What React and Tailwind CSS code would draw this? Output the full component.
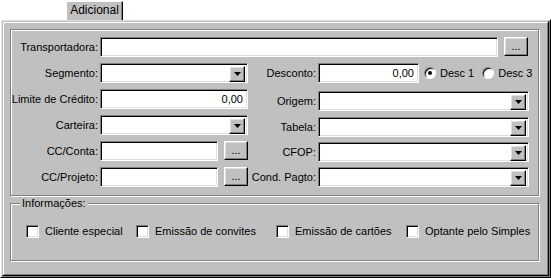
const sunken =
  "border border-t-[#808080] border-l-[#808080] border-b-white border-r-white shadow-[inset_1px_1px_0_#000,inset_-1px_-1px_0_#dfdfdf] bg-white";
const raised =
  "border border-t-white border-l-white border-r-black border-b-black shadow-[inset_-1px_-1px_0_#808080,inset_1px_1px_0_#dfdfdf] bg-[#c0c0c0]";

function Label({ width, children }) {
  return (
    <div className={`${width} shrink-0 pr-[2px] text-right leading-[20px]`}>{children}</div>
  );
}

function Edit({ width, value }) {
  return (
    <div className={`${sunken} ${width} h-[20px] shrink-0 px-[4px] text-right leading-[18px]`}>
      {value}
    </div>
  );
}

function Combo({ width }) {
  return (
    <div className={`${sunken} ${width} h-[20px] shrink-0 flex justify-end p-[2px]`}>
      <div className={`${raised} w-[16px] h-[16px] flex items-center justify-center`}>
        <svg width="7" height="4" viewBox="0 0 7 4">
          <path d="M0 0h7L3.5 4z" fill="#000" />
        </svg>
      </div>
    </div>
  );
}

function DotsButton() {
  return (
    <div className={`${raised} w-[24px] h-[19px] shrink-0 flex items-end justify-center pb-[3px] leading-none`}>
      ...
    </div>
  );
}

function Radio({ checked, label }) {
  return (
    <div className="flex items-center gap-[4px]">
      <div className="w-[12px] h-[12px] rounded-full border border-t-[#808080] border-l-[#808080] border-b-white border-r-white bg-white flex items-center justify-center shadow-[inset_1px_1px_0_#000]">
        {checked && <div className="w-[4px] h-[4px] rounded-full bg-black" />}
      </div>
      <span>{label}</span>
    </div>
  );
}

function Check({ label, width }) {
  return (
    <div className={`${width} flex items-center gap-[6px]`}>
      <div className={`${sunken} w-[13px] h-[13px] shrink-0`} />
      <span>{label}</span>
    </div>
  );
}

function Etched({ className, children }) {
  return (
    <div
      className={`${className} border border-[#808080] shadow-[1px_1px_0_#fff,inset_1px_1px_0_#fff]`}
    >
      {children}
    </div>
  );
}

export default function App() {
  return (
    <div
      className="w-[551px] h-[278px] bg-white text-[11px] text-black overflow-hidden"
      style={{ fontFamily: '"Liberation Sans", Arial, sans-serif' }}
    >
      <div className="h-[19px] flex items-end">
        <div className="ml-[66px] w-[57px] h-[19px] bg-[#c0c0c0] border-l border-t border-white border-r border-r-black shadow-[inset_-1px_0_0_#808080] text-center leading-[17px] relative top-[1px] z-10 text-[12px]">
          Adicional
        </div>
      </div>
      <div className="h-[259px] bg-[#c0c0c0] border-t border-l border-white border-r border-b border-r-black border-b-black">
        <div className="h-full border border-t-[#dfdfdf] border-l-[#dfdfdf] border-r-[#808080] border-b-[#808080]">
          <div className="h-full border border-t-[#c0c0c0] border-l-[#c0c0c0] border-r-black border-b-black">
            <div className="h-full border border-t-white border-l-white border-r-[#808080] border-b-[#808080] pl-[6px] pt-[6px]">
              <Etched className="w-[529px] h-[167px] pt-[7px]">
                <div className="flex flex-col gap-[6px]">
                  <div className="flex">
                    <Label width="w-[89px]">Transportadora:</Label>
                    <Edit width="w-[398px]" />
                    <div className="ml-[6px]">
                      <DotsButton />
                    </div>
                  </div>
                  <div className="flex">
                    <div className="w-[307px] shrink-0 flex flex-col gap-[6px]">
                      <div className="flex">
                        <Label width="w-[89px]">Segmento:</Label>
                        <Combo width="w-[148px]" />
                      </div>
                      <div className="flex">
                        <Label width="w-[89px]">Limite de Crédito:</Label>
                        <Edit width="w-[148px]" value="0,00" />
                      </div>
                      <div className="flex">
                        <Label width="w-[89px]">Carteira:</Label>
                        <Combo width="w-[148px]" />
                      </div>
                      <div className="flex">
                        <Label width="w-[89px]">CC/Conta:</Label>
                        <Edit width="w-[118px]" />
                        <div className="ml-[6px]">
                          <DotsButton />
                        </div>
                      </div>
                      <div className="flex">
                        <Label width="w-[89px]">CC/Projeto:</Label>
                        <Edit width="w-[118px]" />
                        <div className="ml-[6px]">
                          <DotsButton />
                        </div>
                      </div>
                    </div>
                    <div className="flex flex-col gap-[6px] -ml-[70px]">
                      <div className="flex">
                        <Label width="w-[70px]">Desconto:</Label>
                        <Edit width="w-[101px]" value="0,00" />
                        <div className="flex items-center gap-[8px] ml-[5px]">
                          <Radio checked label="Desc 1" />
                          <Radio label="Desc 3" />
                        </div>
                      </div>
                      <div className="flex mt-[2px]">
                        <Label width="w-[70px]">Origem:</Label>
                        <Combo width="w-[211px]" />
                      </div>
                      <div className="flex">
                        <Label width="w-[70px]">Tabela:</Label>
                        <Combo width="w-[211px]" />
                      </div>
                      <div className="flex -mt-[1px]">
                        <Label width="w-[70px]">CFOP:</Label>
                        <Combo width="w-[211px]" />
                      </div>
                      <div className="flex -mt-[1px]">
                        <Label width="w-[70px]">Cond. Pagto:</Label>
                        <Combo width="w-[211px]" />
                      </div>
                    </div>
                  </div>
                </div>
              </Etched>
              <Etched className="relative mt-[7px] w-[529px] h-[58px]">
                <div className="absolute -top-[7px] left-[9px] px-[2px] bg-[#c0c0c0] leading-[13px]">
                  Informações:
                </div>
                <div className="flex pl-[15px] pt-[19px]">
                  <Check width="w-[110px]" label="Cliente especial" />
                  <Check width="w-[140px]" label="Emissão de convites" />
                  <Check width="w-[130px]" label="Emissão de cartões" />
                  <Check width="w-[130px]" label="Optante pelo Simples" />
                </div>
              </Etched>
            </div>
          </div>
        </div>
      </div>
    </div>
  );
}
